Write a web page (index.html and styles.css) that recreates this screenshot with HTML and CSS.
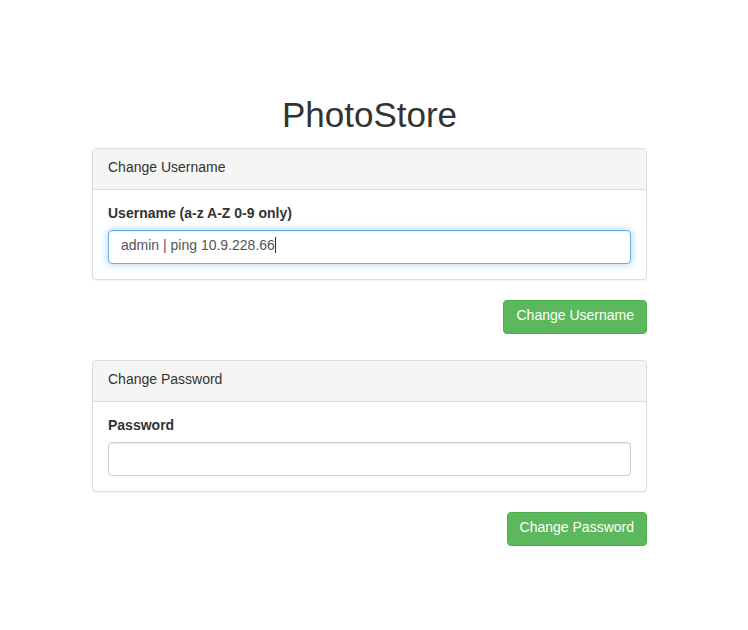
FILE: index.html
```html
<!DOCTYPE html>
<html>
<head>
<meta charset="utf-8">
<title>PhotoStore</title>
<link rel="stylesheet" href="styles.css">
</head>
<body>
<div class="container">
  <h1 class="title">PhotoStore</h1>

  <form class="form-block">
    <div class="panel">
      <div class="panel-heading">Change Username</div>
      <div class="panel-body">
        <label class="label">Username (a-z A-Z 0-9 only)</label>
        <div class="form-control focused" role="textbox">admin | ping 10.9.228.66<span class="caret"></span></div>
      </div>
    </div>
    <div class="actions">
      <button type="button" class="btn">Change Username</button>
    </div>
  </form>

  <form class="form-block">
    <div class="panel">
      <div class="panel-heading">Change Password</div>
      <div class="panel-body">
        <label class="label">Password</label>
        <div class="form-control" role="textbox"></div>
      </div>
    </div>
    <div class="actions">
      <button type="button" class="btn">Change Password</button>
    </div>
  </form>
</div>
</body>
</html>
```

FILE: styles.css
```css
* { box-sizing: border-box; }

html, body {
  margin: 0;
  padding: 0;
  background: #fff;
}

body {
  font-family: "Liberation Sans", Arial, sans-serif;
  font-size: 14px;
  line-height: 20px;
  color: #333;
}

.container {
  width: 555px;
  margin-left: 92px;
  padding-top: 95px;
}

.title {
  margin: 0 0 13px;
  font-size: 35px;
  font-weight: 500;
  line-height: 40px;
  text-align: center;
  color: #333;
}

.form-block {
  margin: 0 0 26px;
}

.panel {
  border: 1px solid #ddd;
  border-radius: 4px;
  background: #fff;
  box-shadow: 0 1px 1px rgba(0, 0, 0, 0.05);
  margin-bottom: 20px;
}

.panel-heading {
  padding: 8px 15px 12px;
  background: #f5f5f5;
  border-bottom: 1px solid #ddd;
  border-radius: 3px 3px 0 0;
  color: #333;
}

.panel-body {
  padding: 13px 15px 15px;
}

.label {
  display: block;
  font-weight: bold;
  margin-bottom: 7px;
}

.form-control {
  height: 34px;
  padding: 4px 12px 8px;
  border: 1px solid #ccc;
  border-radius: 4px;
  color: #555;
  background: #fff;
  box-shadow: inset 0 1px 1px rgba(0, 0, 0, 0.075);
  line-height: 20px;
  white-space: nowrap;
}

.form-control.focused {
  border-color: #66afe9;
  box-shadow: inset 0 1px 1px rgba(0, 0, 0, 0.075), 0 0 8px rgba(102, 175, 233, 0.6);
}

.caret {
  display: inline-block;
  width: 1px;
  height: 16px;
  background: #333;
  vertical-align: -3px;
}

.actions {
  display: flex;
  justify-content: flex-end;
}

.btn {
  height: 34px;
  padding: 4px 12px 8px;
  font-family: inherit;
  font-size: 14px;
  line-height: 20px;
  color: #fff;
  background: #5cb85c;
  border: 1px solid #4cae4c;
  border-radius: 4px;
  cursor: pointer;
}
```
